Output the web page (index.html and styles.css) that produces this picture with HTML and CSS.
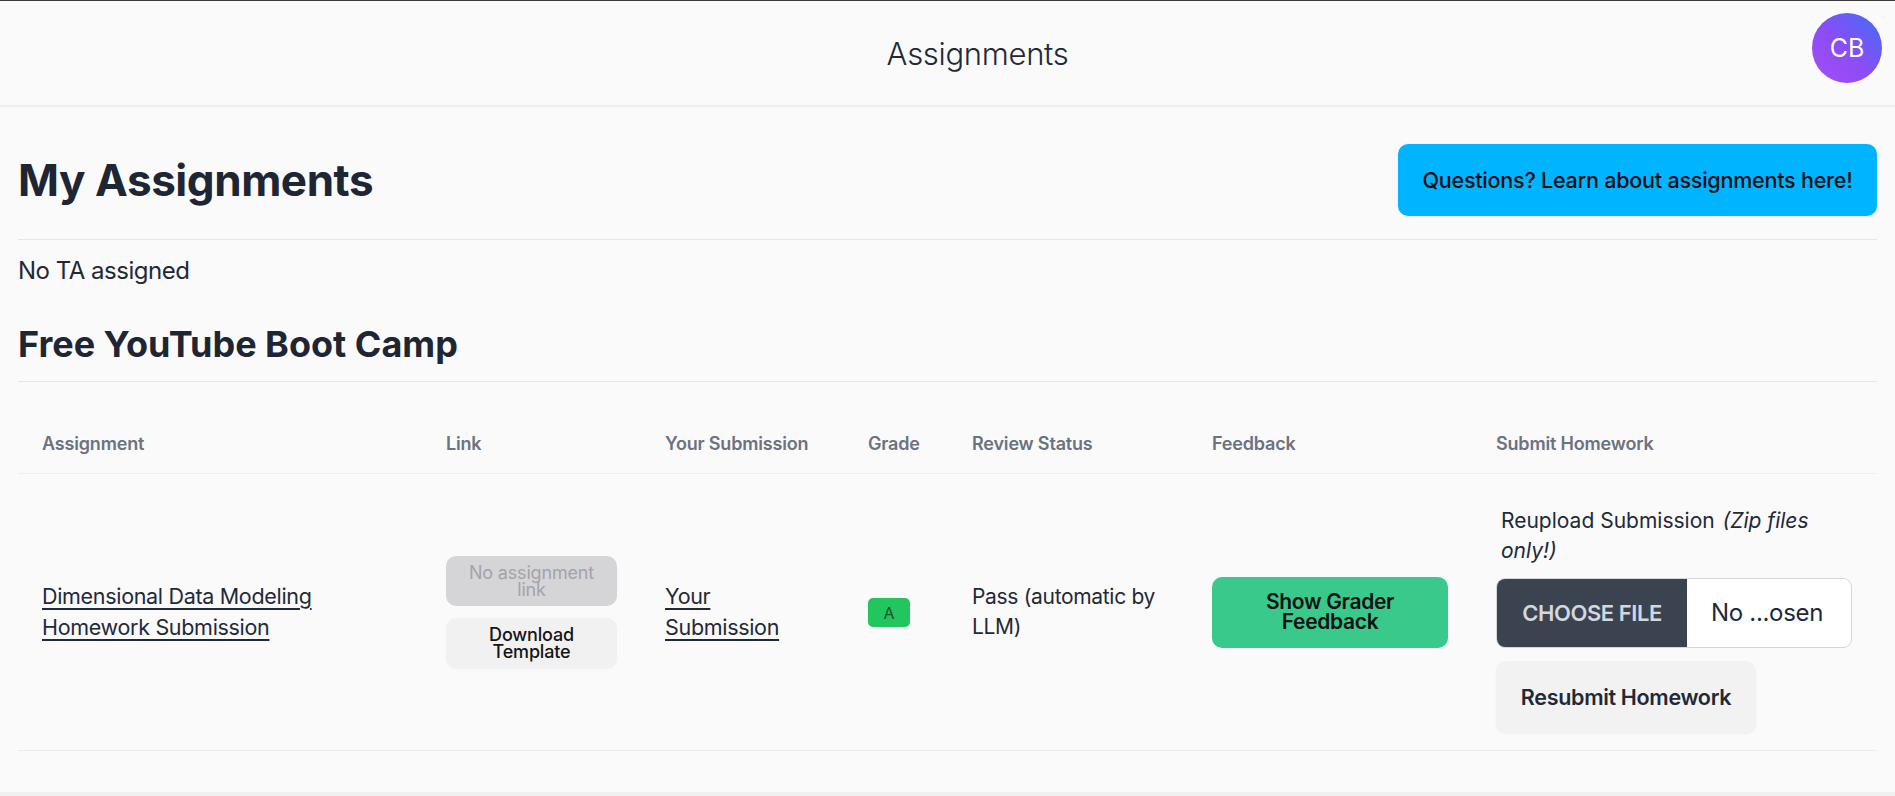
FILE: index.html
```html
<!DOCTYPE html>
<html lang="en">
<head>
<meta charset="utf-8">
<title>Assignments</title>
<link rel="stylesheet" href="styles.css">
</head>
<body>
<div class="page">
  <header class="topbar">
    <div class="topbar-title">Assignments</div>
    <div class="avatar">CB</div>
  </header>
  <main class="content">
    <div class="title-row">
      <h1 class="h1">My Assignments</h1>
      <a class="btn-questions" href="#">Questions? Learn about assignments here!</a>
    </div>
    <hr class="rule rule-top">
    <p class="ta">No TA assigned</p>
    <h2 class="h2">Free YouTube Boot Camp</h2>
    <hr class="rule rule-course">
    <table class="grid">
      <colgroup>
        <col class="c-assign">
        <col class="c-link">
        <col class="c-sub">
        <col class="c-grade">
        <col class="c-review">
        <col class="c-feedback">
        <col class="c-submit">
      </colgroup>
      <thead>
        <tr>
          <th>Assignment</th>
          <th>Link</th>
          <th>Your Submission</th>
          <th>Grade</th>
          <th>Review Status</th>
          <th>Feedback</th>
          <th>Submit Homework</th>
        </tr>
      </thead>
      <tbody>
        <tr>
          <td><a class="tlink" href="#">Dimensional Data Modeling Homework Submission</a></td>
          <td>
            <div class="link-stack">
              <span class="btn-small btn-disabled">No assignment link</span>
              <a class="btn-small btn-light" href="#">Download Template</a>
            </div>
          </td>
          <td><a class="tlink" href="#">Your Submission</a></td>
          <td><span class="badge">A</span></td>
          <td class="plain">Pass (automatic by LLM)</td>
          <td><a class="btn-feedback" href="#">Show Grader Feedback</a></td>
          <td class="submit-cell">
            <div class="submit-stack">
              <div class="upload-label">Reupload Submission <em class="upload-note">(Zip files only!)</em></div>
              <div class="file">
                <span class="file-btn">Choose File</span>
                <span class="file-name">No ...osen</span>
              </div>
              <a class="btn-resubmit" href="#">Resubmit Homework</a>
            </div>
          </td>
        </tr>
      </tbody>
    </table>
  </main>
</div>
</body>
</html>
```

FILE: styles.css
```css
* { box-sizing: border-box; }

html, body {
  margin: 0;
  padding: 0;
}

body {
  background: #f0f0f0;
  font-family: "Inter", "Liberation Sans", sans-serif;
  color: #1f2937;
  border-top: 1px solid #3a3a3a;
}

a { color: inherit; }

.page {
  background: #fafafa;
  padding-bottom: 41px;
}

.topbar {
  height: 106px;
  display: flex;
  align-items: center;
  padding: 0 13px 0 13px;
  border-bottom: 2px solid #efefef;
}

.topbar-title {
  flex: 1;
  text-align: center;
  padding-left: 130px;
  font-size: 31px;
  font-weight: 300;
  color: #1f2937;
  letter-spacing: -0.01em;
}

.avatar {
  width: 70px;
  height: 70px;
  border-radius: 50%;
  background: linear-gradient(225deg, #3f6ff6 0%, #8c4cf6 55%, #a84ef5 100%);
  color: #fff;
  display: flex;
  align-items: center;
  justify-content: center;
  font-size: 25px;
  font-weight: 400;
  margin-top: -10px;
}

.content {
  padding: 0 18px;
}

.title-row {
  display: flex;
  align-items: center;
  justify-content: space-between;
  margin-top: 37px;
  height: 72px;
}

.h1 {
  margin: 0;
  font-size: 44px;
  font-weight: 700;
  color: #1e2533;
  letter-spacing: -0.01em;
}

.btn-questions {
  display: flex;
  align-items: center;
  justify-content: center;
  width: 479px;
  height: 72px;
  background: #00b4ff;
  border-radius: 10px;
  color: #0b0f14;
  text-decoration: none;
  font-size: 21.5px;
  font-weight: 500;
  letter-spacing: -0.01em;
}

.rule {
  border: 0;
  border-top: 1px solid #e6e6e6;
  margin: 0;
}

.rule-top { margin-top: 23px; }

.ta {
  margin: 13px 0 0;
  font-size: 24px;
  line-height: 36px;
  font-weight: 400;
  color: #1f2937;
  letter-spacing: -0.02em;
}

.h2 {
  margin: 35px 0 0;
  font-size: 36px;
  line-height: 40px;
  font-weight: 700;
  color: #1e2533;
  letter-spacing: 0;
}

.rule-course { margin-top: 17px; }

.grid {
  width: 100%;
  margin-top: 33px;
  border-collapse: collapse;
  table-layout: fixed;
}

.c-assign { width: 404px; }
.c-link { width: 219px; }
.c-sub { width: 203px; }
.c-grade { width: 104px; }
.c-review { width: 240px; }
.c-feedback { width: 284px; }
.c-submit { width: 405px; }

.grid th {
  text-align: left;
  font-size: 18px;
  line-height: 24px;
  font-weight: 600;
  color: #6b7280;
  padding: 17px 24px;
  border-bottom: 1px solid #efefef;
  letter-spacing: -0.01em;
}

.grid td {
  padding: 24px;
  vertical-align: middle;
  border-bottom: 1px solid #ececec;
  font-size: 21px;
  line-height: 30px;
  color: #1f2937;
  letter-spacing: -0.015em;
}

.tlink {
  font-size: 21.5px;
  text-decoration: underline;
  text-underline-offset: 4px;
  color: #1f2937;
}

.link-stack {
  display: flex;
  flex-direction: column;
  gap: 12px;
}

.btn-small {
  display: flex;
  align-items: center;
  justify-content: center;
  height: 50px;
  border-radius: 10px;
  font-size: 18px;
  line-height: 17px;
  text-align: center;
  text-decoration: none;
  padding: 0 16px;
  letter-spacing: -0.01em;
}

.btn-disabled {
  background: #d5d5d8;
  color: #a3a3aa;
}

.btn-light {
  background: #f1f1f1;
  color: #141414;
  font-weight: 500;
  box-shadow: 0 1px 2px rgba(0, 0, 0, 0.04);
}

.badge {
  display: inline-flex;
  align-items: center;
  justify-content: center;
  width: 42px;
  height: 29px;
  background: #22c55e;
  color: #14532d;
  border-radius: 5px;
  font-size: 16px;
  line-height: 1;
  letter-spacing: 0;
}

.btn-feedback {
  display: flex;
  align-items: center;
  justify-content: center;
  width: 236px;
  height: 71px;
  background: #39c98a;
  border-radius: 10px;
  color: #0f1115;
  text-decoration: none;
  text-align: center;
  font-size: 21px;
  line-height: 20px;
  font-weight: 600;
  padding: 0 30px;
}

.grid td.submit-cell {
  padding: 32px 24px 17px;
}

.submit-stack {
  display: flex;
  flex-direction: column;
  align-items: flex-start;
}

.upload-label {
  padding: 0 5px;
  font-size: 21px;
  line-height: 30px;
  color: #1f2937;
  font-weight: 400;
  letter-spacing: 0;
}

.upload-note {
  font-style: italic;
  padding-left: 2px;
}

.file {
  margin-top: 12px;
  display: flex;
  width: 356px;
  height: 70px;
  border: 1px solid #d6d6d6;
  border-radius: 9px;
  overflow: hidden;
  background: #fff;
}

.file-btn {
  width: 190px;
  display: flex;
  align-items: center;
  justify-content: center;
  background: #3c4350;
  color: #d3d7de;
  text-transform: uppercase;
  font-size: 22px;
  font-weight: 600;
  letter-spacing: -0.02em;
}

.file-name {
  display: flex;
  align-items: center;
  padding-left: 24px;
  font-size: 24px;
  color: #1f2937;
}

.btn-resubmit {
  margin-top: 13px;
  display: flex;
  align-items: center;
  justify-content: center;
  width: 260px;
  height: 72px;
  background: #f2f2f2;
  border-radius: 10px;
  color: #1f2937;
  text-decoration: none;
  font-size: 21.5px;
  font-weight: 600;
  box-shadow: 0 1px 2px rgba(0, 0, 0, 0.05);
}
```
